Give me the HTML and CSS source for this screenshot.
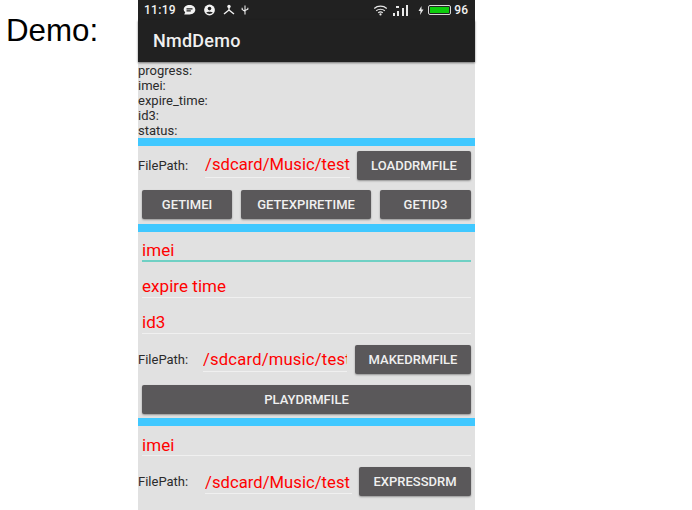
FILE: index.html
```html
<!DOCTYPE html>
<html>
    <head>
        <meta charset="utf-8">
        <title>NmdDemo</title>
        <link rel="stylesheet" href="styles.css">
    </head>
    <body>
        <div class="slide">
            <div class="slide-label">Demo:</div>
            <div class="phone">
                <div class="status-bar">
                    <span class="clock">11:19</span>
                    <svg class="icon icon-chat" width="13" height="12" viewBox="0 0 13 12"><path fill="#f2f2f2" d="M6.5 1C9.8 1 12.3 3 12.3 5.7S9.8 10.4 6.5 10.4H1.2L2.2 8.2C1.2 7.4.7 6.6.7 5.7.7 3 3.2 1 6.5 1Z"/><path fill="#212121" d="M3.5 4.3H9.5V5.5H3.5ZM3.5 6.3H7.8V7.5H3.5Z"/></svg>
                    <svg class="icon icon-person" width="13" height="12" viewBox="0 0 12 12"><circle cx="6" cy="6" r="5.4" fill="#f2f2f2"/><circle cx="6" cy="4.6" r="1.8" fill="#212121"/><path fill="#212121" d="M2.8 8.6C3.6 7.5 8.4 7.5 9.2 8.6 8.4 9.6 7.2 10 6 10S3.6 9.6 2.8 8.6Z"/></svg>
                    <svg class="icon icon-net" width="14" height="12" viewBox="0 0 14 12"><path fill="none" stroke="#f2f2f2" stroke-width="1.4" d="M7 2V6L2 10M7 6L12 10"/><circle cx="7" cy="2.4" r="1.7" fill="#f2f2f2"/></svg>
                    <svg class="icon icon-usb" width="8" height="12" viewBox="0 0 9 12"><path fill="none" stroke="#f2f2f2" stroke-width="1.2" d="M4.5 1V11M1.3 3.5V5.5L4.5 7.5M7.7 3.5V5L4.500 6.500"/></svg>
                    <span class="status-spacer"></span>
                    <svg class="icon icon-wifi" width="15" height="11" viewBox="0 0 13 10"><path fill="none" stroke="#e8e8e8" stroke-width="1.1" d="M.8 3.2C4 .4 9 .4 12.2 3.2M2.6 5.2C4.8 3.4 8.2 3.4 10.4 5.2M4.4 7C5.5 6.2 7.5 6.2 8.6 7"/><circle cx="6.5" cy="8.6" r="1" fill="#e8e8e8"/></svg>
                    <svg class="icon icon-signal" width="19" height="11" viewBox="0 0 19 11"><path fill="#e8e8e8" d="M0 8H2V11H0ZM4 6H6V11H4ZM9 3H11V11H9ZM13 0H15V11H13ZM3 1H6V3H3Z"/></svg>
                    <svg class="icon icon-bolt" width="6" height="9" viewBox="0 0 6 9"><path fill="#e8e8e8" d="M3.500 0 .5 5H2.500L2 9 5.500 3.500H3.500Z"/></svg>
                    <span class="battery"><span class="battery-fill"></span></span>
                    <span class="battery-level">96</span>
                </div>
                <div class="app-bar">NmdDemo</div>

                <div class="content">
                    <div class="info">
                        <div>progress:</div>
                        <div>imei:</div>
                        <div>expire_time:</div>
                        <div>id3:</div>
                        <div>status:</div>
                    </div>

                    <div class="divider"></div>

                    <div class="row file-row first-file">
                        <span class="file-label">FilePath:</span>
                        <div class="field path-load"><span>/sdcard/Music/test</span></div>
                        <button class="btn btn-load">LOADDRMFILE</button>
                    </div>
                    <div class="row button-row">
                        <button class="btn btn-imei">GETIMEI</button>
                        <button class="btn btn-expire">GETEXPIRETIME</button>
                        <button class="btn btn-id3">GETID3</button>
                    </div>

                    <div class="divider divider-second"></div>

                    <div class="field field-wide field-active"><span>imei</span></div>
                    <div class="field field-wide"><span>expire time</span></div>
                    <div class="field field-wide"><span>id3</span></div>
                    <div class="row file-row make-file">
                        <span class="file-label label-make">FilePath:</span>
                        <div class="field path-make"><span>/sdcard/music/test</span></div>
                        <button class="btn btn-make">MAKEDRMFILE</button>
                    </div>
                    <div class="row play-row">
                        <button class="btn btn-play">PLAYDRMFILE</button>
                    </div>

                    <div class="divider divider-third"></div>

                    <div class="field field-wide field-last"><span>imei</span></div>
                    <div class="row file-row express-file">
                        <span class="file-label">FilePath:</span>
                        <div class="field path-express"><span>/sdcard/Music/test</span></div>
                        <button class="btn btn-express">EXPRESSDRM</button>
                    </div>
                </div>
            </div>
        </div>
    </body>
</html>
```

FILE: styles.css
```css
html, body {
    margin: 0;
    height: 510px;
    overflow: hidden;
    background: #ffffff;
}

.slide {
    display: flex;
    height: 510px;
}

.slide-label {
    width: 132px;
    padding: 13px 0 0 6px;
    font-family: "Liberation Sans", Arial, sans-serif;
    font-size: 31.3px;
    line-height: 36px;
    color: #000000;
}

.phone {
    width: 337px;
    height: 510px;
    display: flex;
    flex-direction: column;
    font-family: Roboto, sans-serif;
    background: #e1e1e1;
}

.status-bar {
    height: 20px;
    display: flex;
    align-items: center;
    padding: 0 7px 0 6px;
    background: #212121;
    color: #f2f2f2;
    font-size: 12px;
    font-weight: 500;
}

.clock {
    letter-spacing: 0.3px;
}

.status-spacer {
    flex: 1;
}

.icon {
    display: block;
}

.icon-chat {
    margin-left: 7px;
}

.icon-person {
    margin-left: 7px;
}

.icon-net {
    margin-left: 6px;
}

.icon-usb {
    margin-left: 5px;
}

.icon-signal {
    margin-left: 5px;
}

.icon-bolt {
    margin-left: 6px;
}

.battery {
    width: 19px;
    height: 6px;
    margin-left: 4px;
    padding: 1px;
    border: 1px solid #d8d8d8;
    border-radius: 2px;
}

.battery-fill {
    display: block;
    height: 100%;
    background: #0ccc0c;
}

.battery-level {
    margin-left: 3px;
}

.app-bar {
    height: 42px;
    padding-left: 15px;
    line-height: 41px;
    background: #212121;
    color: #f0f0f0;
    font-weight: 500;
    font-size: 18px;
    letter-spacing: 0.25px;
    box-shadow: 0 1px 2px rgba(0, 0, 0, 0.5);
}

.content {
    flex: 1;
}

.info {
    padding-top: 1px;
    font-size: 13px;
    line-height: 15px;
    color: #2b2b2b;
}

.divider {
    height: 8px;
    background: #40c8ff;
}

.row {
    display: flex;
    align-items: center;
}

.file-label {
    width: 67px;
    font-size: 13px;
    color: #2b2b2b;
}

.label-make {
    width: 65px;
}

.btn {
    height: 29px;
    padding: 0;
    border: 0;
    border-radius: 2px;
    background: #5a585a;
    color: #f0f0f0;
    font-family: Roboto, sans-serif;
    font-size: 13px;
    font-weight: 500;
    box-shadow: 0 1px 2px rgba(0, 0, 0, 0.35);
}

.field {
    border-bottom: 1px solid #f0f0f0;
    color: #ff0000;
    font-size: 16.6px;
    letter-spacing: 0.05px;
    white-space: nowrap;
    overflow: hidden;
    box-sizing: border-box;
}

.field-wide {
    margin: 0 4px;
    font-size: 17px;
}

.field-active {
    height: 30px;
    line-height: 36px;
    border-bottom: 2px solid #6fd0c4;
}

.field-wide + .field-wide {
    height: 36px;
    line-height: 49px;
}

.first-file {
    margin-top: 5px;
}

.button-row {
    margin: 10px 4px 0;
    justify-content: space-between;
}

.divider-second {
    margin-top: 5px;
}

.path-load {
    width: 145px;
    height: 25px;
    line-height: 23px;
}

.btn-load {
    width: 114px;
    margin-left: 7px;
}

.btn-imei {
    width: 90px;
}

.btn-expire {
    width: 130px;
}

.btn-id3 {
    width: 91px;
}

.make-file {
    margin-top: 11px;
}

.path-make {
    width: 144px;
    height: 25px;
    line-height: 25px;
    letter-spacing: 0.2px;
}

.btn-make {
    width: 116px;
    margin-left: 8px;
}

.play-row {
    margin: 11px 4px 0;
}

.btn-play {
    width: 329px;
}

.divider-third {
    margin-top: 4px;
}

.field-last {
    height: 30px;
    line-height: 38px;
}

.express-file {
    margin-top: 11px;
}

.path-express {
    width: 147px;
    height: 25px;
    line-height: 27px;
}

.btn-express {
    width: 112px;
    margin-left: 7px;
}
```
